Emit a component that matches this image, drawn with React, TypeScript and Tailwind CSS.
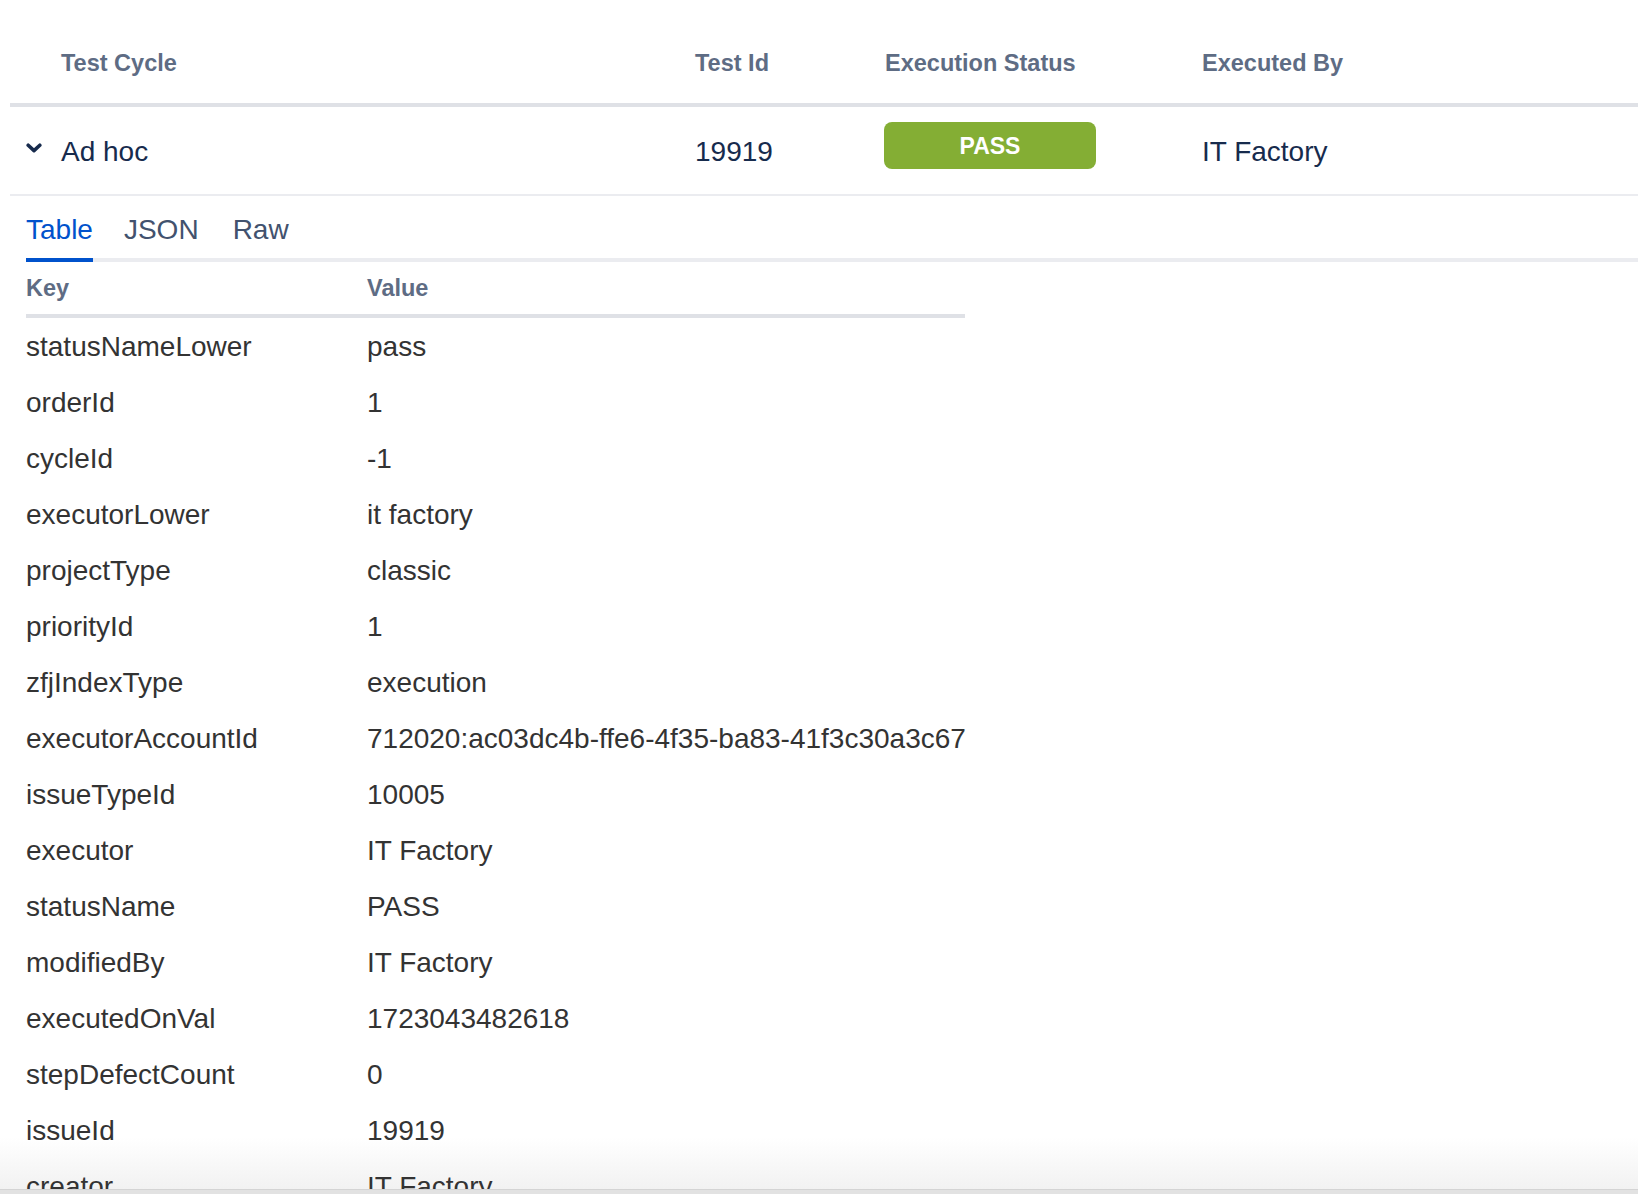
const ROWS: [string, string][] = [
  ["statusNameLower", "pass"],
  ["orderId", "1"],
  ["cycleId", "-1"],
  ["executorLower", "it factory"],
  ["projectType", "classic"],
  ["priorityId", "1"],
  ["zfjIndexType", "execution"],
  ["executorAccountId", "712020:ac03dc4b-ffe6-4f35-ba83-41f3c30a3c67"],
  ["issueTypeId", "10005"],
  ["executor", "IT Factory"],
  ["statusName", "PASS"],
  ["modifiedBy", "IT Factory"],
  ["executedOnVal", "1723043482618"],
  ["stepDefectCount", "0"],
  ["issueId", "19919"],
  ["creator", "IT Factory"],
  ["executedOn", "1723043482618"],
  ["cycleName", "Ad hoc"],
];

function ChevronDown() {
  return (
    <svg width="16" height="10" viewBox="0 0 16 10" fill="none">
      <path
        d="M2.2 2.2 L8 7.6 L13.8 2.2"
        stroke="#172b4d"
        strokeWidth="3.6"
        strokeLinecap="round"
        strokeLinejoin="round"
      />
    </svg>
  );
}

function Tabs() {
  const tabs = ["Table", "JSON", "Raw"];
  return (
    <div className="flex border-b-[4px] border-[#ebecf0] pt-[20px]">
      {tabs.map((tab, i) => (
        <button
          key={tab}
          type="button"
          className={
            "-mb-[4px] border-b-[4px] pb-[14px] text-[28px] leading-[28px] " +
            (i === 0
              ? "mr-[31px] border-[#0052cc] text-[#0052cc]"
              : i === 1
                ? "mr-[34px] border-transparent text-[#42526e]"
                : "border-transparent text-[#42526e]")
          }
        >
          {tab}
        </button>
      ))}
    </div>
  );
}

/** Execution detail: test cycle row expanded into a key/value table. */
export default function App() {
  return (
    <div className="relative h-[1194px] overflow-hidden bg-white font-['Liberation_Sans',Arial,sans-serif]">
      {/* soft fade behind the last visible rows */}
      <div className="absolute inset-x-0 bottom-[5px] h-[52px] bg-gradient-to-b from-white to-[#f2f2f2]" />

      <div className="relative">
        <div className="ml-[10px]">
          <div className="grid h-[107px] grid-cols-[675px_190px_317px_1fr] border-b-[4px] border-[#dfe1e6] pt-[49px] text-[23.5px] font-bold leading-[28px] text-[#5e6c84]">
            <div className="pl-[51px]">Test Cycle</div>
            <div className="pl-[10px]">Test Id</div>
            <div className="pl-[10px]">Execution Status</div>
            <div className="pl-[10px]">Executed By</div>
          </div>

          <div className="grid h-[89px] grid-cols-[675px_190px_317px_1fr] border-b-[2px] border-[#ebecf0] text-[28px] leading-[28px] text-[#172b4d]">
            <div className="flex items-start gap-[19px] pl-[16px] pt-[31px]">
              <span className="mt-[5px]">
                <ChevronDown />
              </span>
              <span>Ad hoc</span>
            </div>
            <div className="pl-[10px] pt-[31px]">19919</div>
            <div className="pl-[9px] pt-[15px]">
              <div className="flex h-[47px] w-[212px] items-center justify-center rounded-[8px] bg-[#84ae34] text-[23px] font-bold text-white">
                PASS
              </div>
            </div>
            <div className="pl-[10px] pt-[31px]">IT Factory</div>
          </div>
        </div>

        <div className="ml-[26px]">
          <Tabs />

          <div className="w-[939px]">
            <div className="grid grid-cols-[341px_1fr] border-b-[4px] border-[#dfe1e6] pb-[12px] pt-[12px] text-[23.5px] font-bold leading-[28px] text-[#5e6c84]">
              <div>Key</div>
              <div>Value</div>
            </div>
            {ROWS.map(([key, value]) => (
              <div
                key={key}
                className="grid h-[56px] grid-cols-[341px_1fr] items-center pt-[2px] text-[28px] leading-[28px] text-[#333333]"
              >
                <div>{key}</div>
                <div className="whitespace-nowrap">{value}</div>
              </div>
            ))}
          </div>
        </div>
      </div>

      <div className="absolute inset-x-0 bottom-0 h-[5px] border-t border-[#d4d4d4] bg-[#e2e2e2]" />
    </div>
  );
}
